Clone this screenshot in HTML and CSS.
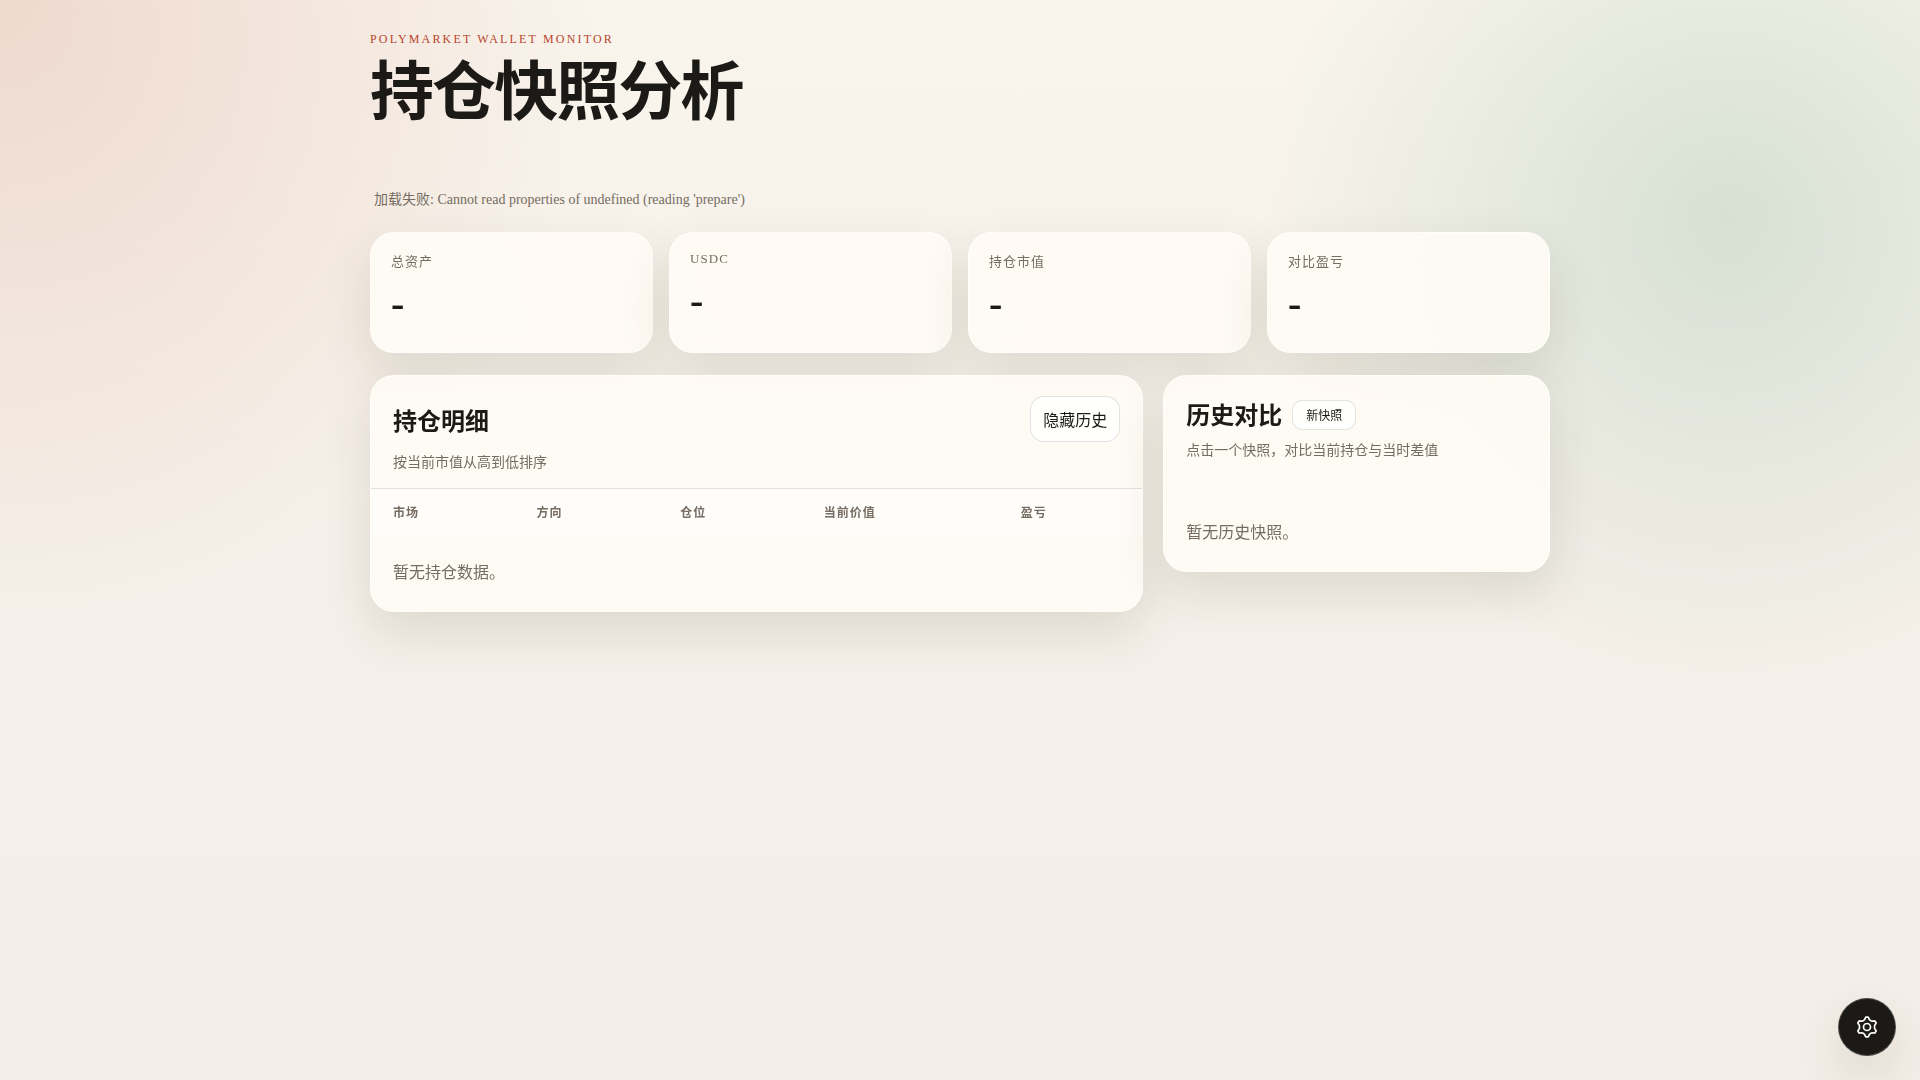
FILE: index.html
```html
<!DOCTYPE html>
<html lang="zh-CN">
<head>
<meta charset="UTF-8">
<meta name="viewport" content="width=device-width, initial-scale=1">
<title>持仓快照分析</title>
<link rel="stylesheet" href="styles.css">
</head>
<body>

<main class="page">
	<header class="hero">
		<p class="eyebrow">POLYMARKET WALLET MONITOR</p>
		<h1>持仓快照分析</h1>
	</header>

	<p class="status">加载失败: Cannot read properties of undefined (reading 'prepare')</p>

	<!-- 资产概览 -->
	<section class="stats">
		<article class="card">
			<span class="label">总资产</span>
			<strong class="value">-</strong>
		</article>
		<article class="card">
			<span class="label">USDC</span>
			<strong class="value">-</strong>
		</article>
		<article class="card">
			<span class="label">持仓市值</span>
			<strong class="value">-</strong>
		</article>
		<article class="card">
			<span class="label">对比盈亏</span>
			<strong class="value">-</strong>
		</article>
	</section>

	<section class="layout">
		<!-- 持仓明细 -->
		<section class="panel">
			<div class="panel-head">
				<div>
					<h2 class="main-title">持仓明细</h2>
					<p class="sub">按当前市值从高到低排序</p>
				</div>
				<button type="button" class="btn">隐藏历史</button>
			</div>
			<table>
				<thead>
					<tr>
						<th>市场</th>
						<th>方向</th>
						<th>仓位</th>
						<th>当前价值</th>
						<th>盈亏</th>
					</tr>
				</thead>
				<tbody></tbody>
			</table>
			<p class="empty">暂无持仓数据。</p>
		</section>

		<!-- 历史对比 -->
		<aside class="panel">
			<div class="side-head">
				<div class="title-row">
					<h2>历史对比</h2>
					<button type="button" class="btn small">新快照</button>
				</div>
				<p class="sub">点击一个快照，对比当前持仓与当时差值</p>
			</div>
			<p class="empty">暂无历史快照。</p>
		</aside>
	</section>
</main>

<button type="button" class="fab" aria-label="设置">
	<svg viewBox="0 0 24 24" width="24" height="24" fill="none" stroke="currentColor" stroke-width="1.7" stroke-linecap="round" stroke-linejoin="round">
		<path d="M9.7 4.4 10.5 2.6Q10.7 2.1 11.2 2.1H12.8Q13.3 2.1 13.5 2.6L14.3 4.4Q15.6 6.2 17.43 6.21L19.4 5.98Q19.92 5.92 20.2 6.4L21 7.75Q21.22 8.18 20.9 8.6L19.73 10.19Q19.1 12 19.73 13.81L20.9 15.4Q21.22 15.82 21 16.25L20.2 17.6Q19.92 18.08 19.4 18.02L17.43 17.79Q15.6 17.8 14.3 19.6L13.5 21.4Q13.3 21.9 12.8 21.9H11.2Q10.7 21.9 10.5 21.4L9.7 19.6Q8.4 17.8 6.57 17.79L4.6 18.02Q4.08 18.08 3.8 17.6L3 16.25Q2.78 15.82 3.1 15.4L4.27 13.81Q4.9 12 4.27 10.19L3.1 8.6Q2.78 8.18 3 7.75L3.8 6.4Q4.08 5.92 4.6 5.98L6.57 6.21Q8.4 6.2 9.7 4.4Z"/>
		<circle cx="12" cy="12" r="3.5"/>
	</svg>
</button>

</body>
</html>
```
FILE: styles.css
```css
:root {
	--ink: #1c1a17;
	--muted: #756c62;
	--accent: #b8452c;
	--line: rgba(28, 26, 23, 0.12);
	--shadow: 0 20px 50px rgba(61, 52, 20, 0.12);
}

* { box-sizing: border-box; }

body {
	margin: 0;
	min-height: 100vh;
	color: var(--ink);
	font-family: "Liberation Serif", "Noto Sans CJK SC", serif;
	background:
		radial-gradient(circle at top left, rgba(184, 69, 44, 0.16), transparent 28%),
		radial-gradient(circle at 90% 20%, rgba(45, 125, 90, 0.16), transparent 24%),
		linear-gradient(180deg, #f9f5ed 0%, #f5f0e9 50%, #f3eee7 100%);
}

h1, h2, p { margin: 0; }

button { font-family: inherit; cursor: pointer; }

.page {
	max-width: 1220px;
	margin: 0 auto;
	padding: 32px 20px 60px;
}

.eyebrow {
	margin-bottom: 14px;
	color: var(--accent);
	font-size: 12px;
	letter-spacing: 0.18em;
}

h1 {
	font-size: 64px;
	line-height: 1;
	letter-spacing: -0.03em;
}

.status {
	margin: 63px 4px 24px;
	color: var(--muted);
	font-size: 14px;
}

.stats {
	display: grid;
	grid-template-columns: repeat(4, 1fr);
	gap: 16px;
	margin-bottom: 22px;
}

.card,
.panel {
	border: 1px solid rgba(255, 255, 255, 0.7);
	border-radius: 24px;
	background: rgba(255, 252, 245, 0.9);
	box-shadow: var(--shadow);
	backdrop-filter: blur(10px);
}

.card {
	min-height: 121px;
	padding: 18px 20px;
}

.label {
	display: block;
	color: var(--muted);
	font-size: 13px;
	letter-spacing: 0.08em;
}

.value {
	display: block;
	margin-top: 10px;
	font-size: 40px;
}

.layout {
	display: grid;
	grid-template-columns: 2fr 1fr;
	gap: 20px;
	align-items: start;
}

.panel { overflow: hidden; }

.panel-head {
	display: flex;
	justify-content: space-between;
	align-items: flex-start;
	padding: 20px 22px 17px;
	border-bottom: 1px solid var(--line);
}

h2 { font-size: 24px; }

.main-title { margin: 6px 0 14px; }

.sub {
	color: var(--muted);
	font-size: 14px;
}

.btn {
	padding: 10px 12px;
	border: 1px solid var(--line);
	border-radius: 14px;
	background: rgba(255, 255, 255, 0.8);
	color: var(--ink);
	font-size: 16px;
}

.btn.small {
	padding: 5px 13px;
	border-radius: 10px;
	font-size: 12px;
}

table {
	width: 100%;
	border-collapse: collapse;
}

th {
	padding: 14px 22px;
	background: rgba(255, 255, 255, 0.5);
	color: var(--muted);
	font-size: 12px;
	letter-spacing: 1px;
	text-align: left;
}

.empty {
	padding: 24px 22px 28px;
	color: var(--muted);
	font-size: 16px;
}

.side-head { padding: 20px 22px 36px; }

.title-row {
	display: flex;
	align-items: center;
	gap: 10px;
	margin-bottom: 5px;
}

.title-row h2 { padding-bottom: 3px; }

.fab {
	position: fixed;
	right: 24px;
	bottom: 24px;
	display: grid;
	place-items: center;
	width: 58px;
	height: 58px;
	border: 1px solid rgba(255, 255, 255, 0.2);
	border-radius: 50%;
	background: var(--ink);
	color: #fff;
	box-shadow: var(--shadow);
}
```
